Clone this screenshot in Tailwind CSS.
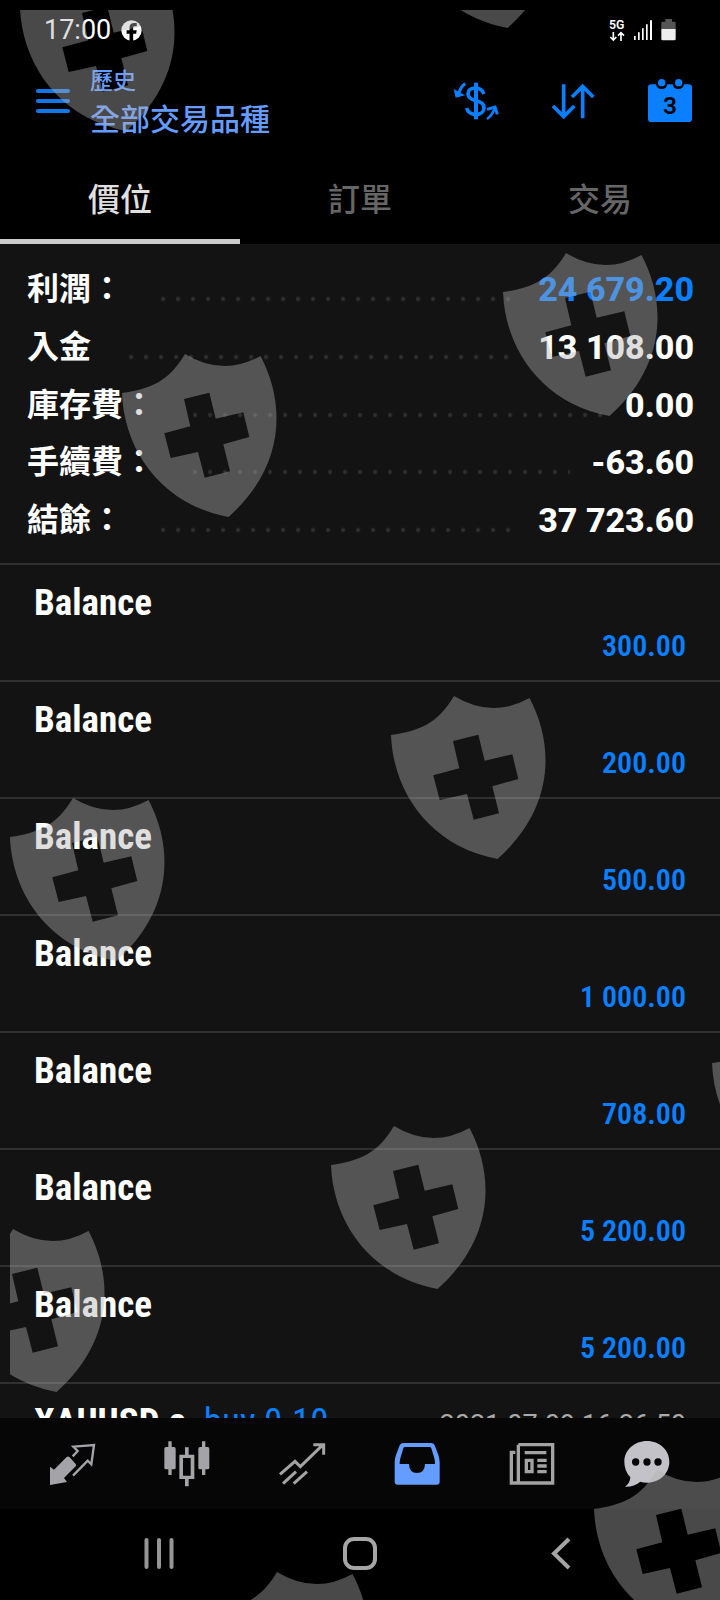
<!DOCTYPE html>
<html lang="zh-TW">
<head>
<meta charset="utf-8">
<meta name="viewport" content="width=device-width, initial-scale=1">
<title>歷史</title>
<script src="https://cdn.jsdelivr.net/npm/@tailwindcss/browser@4"></script>
</head>
<body class="bg-black">
<div class="relative flex h-screen flex-col overflow-hidden bg-black font-[Roboto,'Noto_Sans_CJK_TC',sans-serif] text-white">

  <!-- Status bar -->
  <div class="flex h-15 shrink-0 items-center pr-11 pl-11">
    <time class="text-[27px] leading-8">17:00</time>
    <svg class="ml-[10px] size-[21px]" viewBox="365 58 64 64" role="img" aria-label="Facebook"><circle cx="397" cy="90" r="31" fill="#fff"/><path d="M391 122V100h-9V89h9v-8c0-10 6-14 14-14h8v10h-6c-4 0-5 2-5 5v7h11l-2 11h-9v22z" fill="#000"/></svg>
    <div class="ml-auto flex items-center">
      <svg class="h-6 w-[68px]" viewBox="744 55 204 72" role="img" aria-label="5G">
        <text x="747" y="87" font-size="37" font-weight="600" fill="#fff">5G</text>
        <g stroke="#fff" stroke-width="5" fill="none"><path d="M760 97v24M751 112l9 9 9-9M783 124v-24M774 108l9-9 9 9"/></g>
        <g fill="#fff"><path d="M822 109h5v12h-5zM834 98h5v23h-5zM846 86h5v35h-5zM858 74h5v47h-5zM870 62h6v59h-6z"/><path d="M904 88h43v30q0 4-4 4h-35q-4 0-4-4z" fill="#eee"/></g>
        <path d="M904 88V70q0-4 4-4h8v-8h20v8h7q4 0 4 4v18z" fill="#555"/>
      </svg>
    </div>
  </div>

  <!-- App bar -->
  <header class="flex h-[82px] shrink-0 items-center pr-[26px] pl-9 text-[#0a84ff]">
    <button aria-label="Menu" class="flex w-[34px] flex-col gap-[6px]"><span class="h-[4px] rounded-full bg-[#1477e8]"></span><span class="h-[4px] rounded-full bg-[#1477e8]"></span><span class="h-[4px] rounded-full bg-[#1477e8]"></span></button>
    <h1 class="ml-5 flex flex-col pt-[2px] font-medium text-[#659cff]"><span class="text-[23px] leading-[35px]">歷史</span><span class="text-[30px] leading-[42px]">全部交易品種</span></h1>
    <div class="ml-auto flex gap-[49px]">
      <button aria-label="Currency"><svg class="size-12" viewBox="276 230 144 144" fill="none" stroke="#0a7fff" stroke-width="10"><path d="M348 247v110" stroke-width="12"/><path d="M372 281c-5-13-15-18-25-18-14 0-23 7-23 17 0 12 12 18 26 22 14 3 22 9 22 20 0 12-10 20-24 20-15 0-25-7-28-19" stroke-width="11"/><path d="M316 250q-14 8-20 30" stroke-width="9"/><path d="M281 266l6 26 28-7z" fill="#0a7fff" stroke="none"/><path d="M381 356q14-9 24-33" stroke-width="8"/><path d="M381 327l24-7 7 22" stroke-width="9"/></svg></button>
      <button aria-label="Sort"><svg class="size-12" viewBox="568 230 144 144" fill="none" stroke="#0a7fff" stroke-width="11"><path d="M612 252v98M580 317l32 32 32-32M669 354v-98M637 290l32-32 32 32"/></svg></button>
      <button aria-label="Calendar"><svg class="size-12" viewBox="858 230 144 144"><path d="M874 252h14q2 14 17 14t17-14h16q2 14 17 14t17-14h14q10 0 10 10v93q0 10-10 10H874q-10 0-10-10v-93q0-10 10-10z" fill="#0a7fff"/><circle cx="905" cy="247" r="11" fill="#0a7fff"/><circle cx="956" cy="247" r="11" fill="#0a7fff"/><text x="930" y="340" text-anchor="middle" font-size="74" font-weight="600" fill="#000">3</text></svg></button>
    </div>
  </header>

  <!-- Tabs -->
  <div role="tablist" class="grid h-[102px] shrink-0 grid-cols-3 text-[32px] font-medium">
    <button role="tab" aria-selected="true" class="border-b-5 border-[#ccc] pt-[18px] text-[#e0e0e0]">價位</button>
    <button role="tab" aria-selected="false" class="border-b-5 border-transparent pt-[18px] text-[#666]">訂單</button>
    <button role="tab" aria-selected="false" class="border-b-5 border-transparent pt-[18px] text-[#666]">交易</button>
  </div>

  <main class="min-h-0 flex-1 overflow-hidden bg-[#131313]">
    <dl class="flex h-[319px] flex-col justify-between pt-[17px] pr-[26px] pb-[14px] pl-[27px] text-[32px] leading-[57px] font-bold">
      <div class="flex"><dt>利潤：</dt><dd class="flex flex-1"><span class="mr-[21px] ml-[38px] flex-1 bg-[radial-gradient(circle_at_2px_38px,#303030_1px,transparent_3px)] bg-[size:15px_57px]"></span><b class="text-[34px] leading-[57px] font-extrabold text-[#0a7fff]">24 679.20</b></dd></div>
      <div class="flex"><dt>入金</dt><dd class="flex flex-1"><span class="mr-[21px] ml-[38px] flex-1 bg-[radial-gradient(circle_at_2px_38px,#303030_1px,transparent_3px)] bg-[size:15px_57px]"></span><b class="text-[34px] leading-[57px] font-extrabold">13 108.00</b></dd></div>
      <div class="flex"><dt>庫存費：</dt><dd class="flex flex-1"><span class="mr-[21px] ml-[38px] flex-1 bg-[radial-gradient(circle_at_2px_38px,#303030_1px,transparent_3px)] bg-[size:15px_57px]"></span><b class="text-[34px] leading-[57px] font-extrabold">0.00</b></dd></div>
      <div class="flex"><dt>手續費：</dt><dd class="flex flex-1"><span class="mr-[21px] ml-[38px] flex-1 bg-[radial-gradient(circle_at_2px_38px,#303030_1px,transparent_3px)] bg-[size:15px_57px]"></span><b class="text-[34px] leading-[57px] font-extrabold">-63.60</b></dd></div>
      <div class="flex"><dt>結餘：</dt><dd class="flex flex-1"><span class="mr-[21px] ml-[38px] flex-1 bg-[radial-gradient(circle_at_2px_38px,#303030_1px,transparent_3px)] bg-[size:15px_57px]"></span><b class="text-[34px] leading-[57px] font-extrabold">37 723.60</b></dd></div>
    </dl>
    <ul class="font-['Roboto_Condensed','Liberation_Sans_Narrow',Roboto,sans-serif] text-[37px] leading-[44px] font-bold">
      <li class="flex h-[117px] flex-col border-t-2 border-[#303030] pt-4 pr-[34px] pl-[34px]"><span>Balance</span><span class="text-right text-[30px] leading-[42px] font-semibold text-[#0a7fff]">300.00</span></li>
      <li class="flex h-[117px] flex-col border-t-2 border-[#303030] pt-4 pr-[34px] pl-[34px]"><span>Balance</span><span class="text-right text-[30px] leading-[42px] font-semibold text-[#0a7fff]">200.00</span></li>
      <li class="flex h-[117px] flex-col border-t-2 border-[#303030] pt-4 pr-[34px] pl-[34px]"><span>Balance</span><span class="text-right text-[30px] leading-[42px] font-semibold text-[#0a7fff]">500.00</span></li>
      <li class="flex h-[117px] flex-col border-t-2 border-[#303030] pt-4 pr-[34px] pl-[34px]"><span>Balance</span><span class="text-right text-[30px] leading-[42px] font-semibold text-[#0a7fff]">1 000.00</span></li>
      <li class="flex h-[117px] flex-col border-t-2 border-[#303030] pt-4 pr-[34px] pl-[34px]"><span>Balance</span><span class="text-right text-[30px] leading-[42px] font-semibold text-[#0a7fff]">708.00</span></li>
      <li class="flex h-[117px] flex-col border-t-2 border-[#303030] pt-4 pr-[34px] pl-[34px]"><span>Balance</span><span class="text-right text-[30px] leading-[42px] font-semibold text-[#0a7fff]">5 200.00</span></li>
      <li class="flex h-[117px] flex-col border-t-2 border-[#303030] pt-4 pr-[34px] pl-[34px]"><span>Balance</span><span class="text-right text-[30px] leading-[42px] font-semibold text-[#0a7fff]">5 200.00</span></li>
      <li class="flex h-[117px] items-baseline border-t-2 border-[#303030] pt-4 pr-[34px] pl-[34px]"><span>XAUUSD.e</span><span class="ml-[18px] font-normal text-[#0a7fff]">buy 0.10</span><time class="ml-auto font-[Roboto,sans-serif] text-[27px] font-normal text-[#aaa]">2021.07.09 16:26:50</time></li>
    </ul>
  </main>

  <!-- Bottom navigation -->
  <nav class="grid h-[91px] shrink-0 grid-cols-6 items-center justify-items-center bg-[#060606] pr-4 pl-[14px]">
    <a href="#quotes" aria-label="Quotes"><svg class="size-12" viewBox="144 88 144 144"><path d="M150 168l12 9 38-38q5-3 9 1l18 20q3 4 0 7l-35 35 9 12-51 9z" fill="#a3a3a8"/><path d="M218 137l15-16-13-13 62-5-8 58-11-11-44 45" fill="none" stroke="#a3a3a8" stroke-width="7"/></svg></a>
    <a href="#chart" aria-label="Chart"><svg class="size-12" viewBox="491 90 144 144" fill="#a3a3a8"><path d="M507 94h10v17h7q5 0 5 5v57q0 5-5 5h-7v17h-10v-17h-7q-5 0-5-5v-57q0-5 5-5h7zM608 94h10v17h7q5 0 5 5v57q0 5-5 5h-7v17h-10v-17h-6q-5 0-5-5v-57q0-5 5-5h6z"/><path fill-rule="evenodd" d="M557 112h11v22h17v73h-17v22h-11v-22h-17v-73h17zM551 144v53h23v-53z"/></svg></a>
    <a href="#trade" aria-label="Trade"><svg class="size-12" viewBox="836 90 144 144" fill="none" stroke="#a3a3a3" stroke-width="9"><path d="M842 193l45-39 16 16 69-67M942 104h31v30M851 221l39-36M883 221l40-36"/></svg></a>
    <a href="#history" aria-label="History" aria-current="page"><svg class="size-12" viewBox="100 90 144 144"><path fill-rule="evenodd" d="M132 99h82q8 0 11 7l11 29q4 10 4 22v58q0 9-9 9H114q-9 0-9-9v-58q0-12 4-22l11-29q3-7 12-7zM136 111q-4 0-5 4l-9 30q-2 8-2 17h28q1 27 24 27t24-27h30q0-9-2-17l-9-30q-1-4-5-4z" fill="#659cff"/></svg></a>
    <a href="#news" aria-label="News"><svg class="size-12" viewBox="446 90 144 144" fill="none" stroke="#a3a3a3" stroke-width="10"><path d="M477 104h103v115H456V127h12M477 104v115"/><path d="M496 128h65M534 151h28M534 168h28M534 185h28"/><path d="M501 151h17v34h-17z"/></svg></a>
    <a href="#chat" aria-label="Chat"><svg class="size-12" viewBox="791 90 144 144"><path d="M863 93c38 0 67 27 67 62s-29 63-67 63c-7 0-14-1-20-3q-19 16-46 15 15-10 16-28-18-19-18-47c0-35 30-62 68-62z" fill="#c2c2c8"/><g fill="#060606"><circle cx="829" cy="156" r="11"/><circle cx="863" cy="156" r="11"/><circle cx="896" cy="156" r="11"/></g></svg></a>
  </nav>

  <!-- System navigation -->
  <div class="flex h-[91px] shrink-0 items-center justify-around px-[58px] pb-1">
    <button aria-label="Recents"><svg class="size-9" viewBox="0 0 36 36" stroke="#959595" stroke-width="4" stroke-linecap="round"><path d="M5.500 5v27M18 5v27M30.500 5v27"/></svg></button>
    <button aria-label="Home"><svg class="size-9" viewBox="0 0 36 36" fill="none" stroke="#a5a5a5" stroke-width="4"><rect x="3" y="4" width="30" height="29" rx="9"/></svg></button>
    <button aria-label="Back"><svg class="size-9" viewBox="0 0 36 36" fill="none" stroke="#a5a5a5" stroke-width="4"><path d="M26 4L11 18.500 26 33"/></svg></button>
  </div>

  <!-- Shield pattern laid over the whole screen -->
  <svg class="pointer-events-none absolute inset-0 h-full w-full" viewBox="0 0 720 1600" preserveAspectRatio="xMidYMin slice" aria-hidden="true">
    <defs>
      <path id="shield" fill-rule="evenodd" d="M0 39C29 35 47 27 63 0Q101 23 138.500 2C164 50 163 113 106.500 163C38 150 2 95 0 39zM62 45L68.300 72.300 42.300 79.300 48.700 104 76 98 82.700 123.700 108 117.300 101.300 90.300 127.300 83 121.300 58.300 93.700 64.700 87.300 38.700z"/>
      <clipPath id="area"><path d="M10 10H720V1600H10z"/></clipPath>
    </defs>
    <g clip-path="url(#area)" fill="#b2b2b2" fill-opacity="0.41">
      <use href="#shield" x="20" y="-32"/><use href="#shield" x="401" y="-135"/>
      <use href="#shield" x="503" y="253"/><use href="#shield" x="122" y="354"/>
      <use href="#shield" x="391" y="696"/><use href="#shield" x="10" y="798"/>
      <use href="#shield" x="712" y="1024"/><use href="#shield" x="331" y="1126"/>
      <use href="#shield" x="-50" y="1229"/><use href="#shield" x="594" y="1470"/>
      <use href="#shield" x="214" y="1572"/>
    </g>
  </svg>
</div>
</body>
</html>
